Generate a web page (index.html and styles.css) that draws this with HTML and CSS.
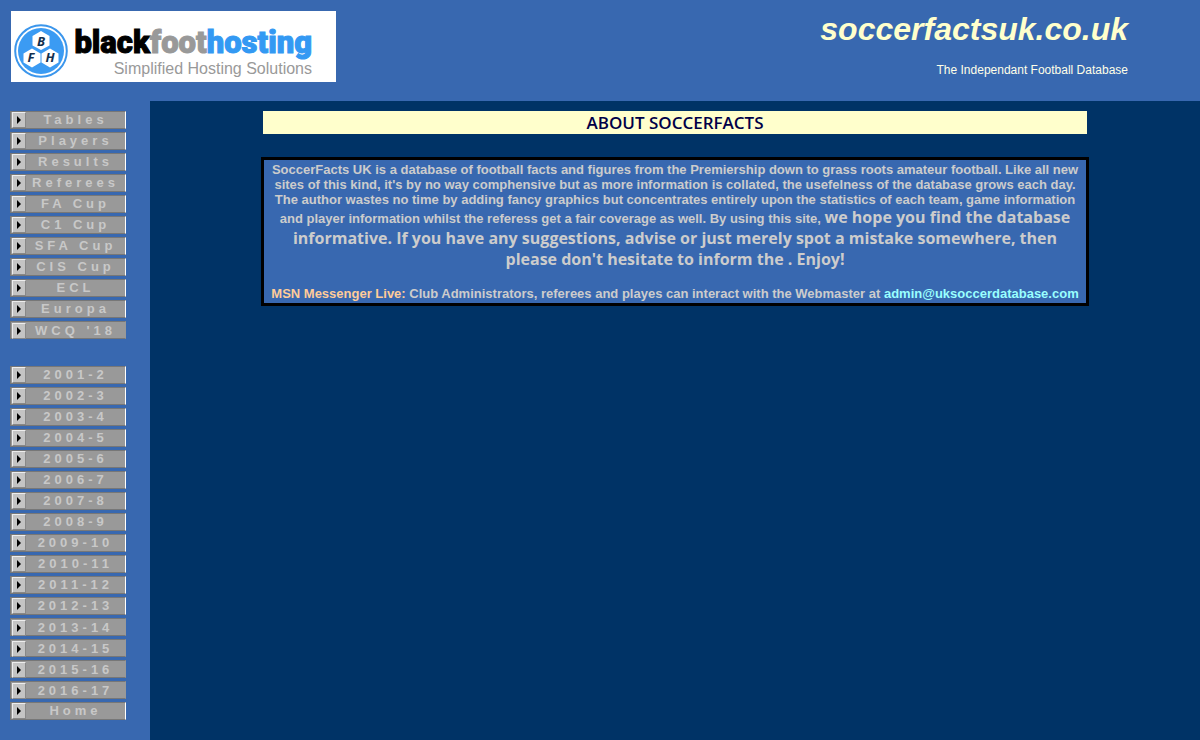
FILE: index.html
```html
<!DOCTYPE html>
<html lang="en">
<head>
    <meta charset="UTF-8">
    <meta name="viewport" content="width=device-width, initial-scale=1.0">
    <title>soccerfactsuk.co.uk</title>
    <link rel="stylesheet" href="styles.css">
</head>
<body>
<header class="header">
    <a class="sponsor" href="#">
        <svg class="sponsor-badge" viewBox="0 0 54 54" width="54" height="54" aria-hidden="true">
            <circle cx="27" cy="27" r="25.8" fill="#fff" stroke="#3b96ec" stroke-width="2"/>
            <circle cx="27" cy="27" r="23" fill="#3b9bf3"/>
            <g fill="#fff">
                <path d="M27 7l8.500 5v9.500L27 26l-8.500-4.500V12z"/>
                <path d="M18 24.500l8.500 5v9L18 43.500l-8.500-5v-9z"/>
                <path d="M36 24.500l8.500 5v9L36 43.500l-8.500-5v-9z"/>
            </g>
            <g class="badge-letters">
                <text x="27" y="22">B</text>
                <text x="17" y="38">F</text>
                <text x="36" y="38">H</text>
            </g>
        </svg>
        <span class="sponsor-text">
            <span class="sponsor-name">black<span class="grey">foot</span><span class="blue">hosting</span></span>
            <span class="sponsor-tag">Simplified Hosting Solutions</span>
        </span>
    </a>
    <div class="site">
        <h1>soccerfactsuk.co.uk</h1>
        <p>The Independant Football Database</p>
    </div>
</header>

<div class="page">
    <nav class="sidebar">
        <ul class="menu">
            <li><a href="#">Tables</a></li>
            <li><a href="#">Players</a></li>
            <li><a href="#">Results</a></li>
            <li><a href="#">Referees</a></li>
            <li><a href="#">FA Cup</a></li>
            <li><a href="#">C1 Cup</a></li>
            <li><a href="#">SFA Cup</a></li>
            <li><a href="#">CIS Cup</a></li>
            <li><a href="#">ECL</a></li>
            <li><a href="#">Europa</a></li>
            <li><a class="flat" href="#">WCQ '18</a></li>
        </ul>
        <ul class="menu">
            <li><a href="#">2001-2</a></li>
            <li><a href="#">2002-3</a></li>
            <li><a href="#">2003-4</a></li>
            <li><a href="#">2004-5</a></li>
            <li><a href="#">2005-6</a></li>
            <li><a href="#">2006-7</a></li>
            <li><a href="#">2007-8</a></li>
            <li><a href="#">2008-9</a></li>
            <li><a href="#">2009-10</a></li>
            <li><a href="#">2010-11</a></li>
            <li><a href="#">2011-12</a></li>
            <li><a href="#">2012-13</a></li>
            <li><a class="flat" href="#">2013-14</a></li>
            <li><a class="flat" href="#">2014-15</a></li>
            <li><a class="flat" href="#">2015-16</a></li>
            <li><a class="flat" href="#">2016-17</a></li>
            <li><a href="#">Home</a></li>
        </ul>
    </nav>

    <main class="main">
        <h2 class="title">ABOUT SOCCERFACTS</h2>
        <div class="about">
            <p>SoccerFacts UK is a database of football facts and figures from the Premiership down to grass roots amateur football. Like all new sites of this kind, it's by no way comphensive but as more information is collated, the usefelness of the database grows each day. The author wastes no time by adding fancy graphics but concentrates entirely upon the statistics of each team, game information and player information whilst the referess get a fair coverage as well. By using this site, <span class="large">we hope you find the database informative. If you have any suggestions, advise or just merely spot a mistake somewhere, then please don't hesitate to inform the . Enjoy!</span></p>
            <p><span class="msn">MSN Messenger Live:</span> Club Administrators, referees and playes can interact with the Webmaster at <a href="mailto:admin@uksoccerdatabase.com">admin@uksoccerdatabase.com</a></p>
        </div>
    </main>
</div>
</body>
</html>
```

FILE: styles.css
```css
* {
    box-sizing: border-box;
}

html, body {
    margin: 0;
    padding: 0;
    height: 100%;
}

body {
    display: flex;
    flex-direction: column;
    background-color: #003366;
    font-family: "Liberation Sans", Arial, sans-serif;
    font-size: 13px;
    line-height: 15px;
}

h1, h2, p, ul {
    margin: 0;
    padding: 0;
}

a {
    text-decoration: none;
}

.header {
    display: flex;
    justify-content: space-between;
    align-items: flex-start;
    background-color: #3868B0;
    padding: 11px 72px 19px 11px;
}

.sponsor {
    display: flex;
    align-items: center;
    width: 325px;
    height: 71px;
    padding: 8px 0 0 3px;
    background-color: #fff;
}

.sponsor-badge {
    flex: none;
}

.badge-letters {
    font-family: "Open Sans", sans-serif;
    font-size: 13px;
    font-style: italic;
    font-weight: 700;
    fill: #12304f;
    text-anchor: middle;
}

.sponsor-text {
    display: flex;
    flex-direction: column;
    align-items: flex-end;
    gap: 2px;
    width: 244px;
    padding-top: 2px;
}

.sponsor-name {
    color: #000;
    font-family: Roboto, sans-serif;
    font-size: 31px;
    font-weight: 900;
    line-height: 32px;
    -webkit-text-stroke: 1px;
}

.sponsor-name .grey {
    color: #999;
}

.sponsor-name .blue {
    color: #3399F3;
}

.sponsor-tag {
    color: #999;
    font-size: 16px;
    line-height: 16px;
}

.site {
    text-align: right;
}

.site h1 {
    color: #FFFFCC;
    font-size: 32px;
    font-style: italic;
    line-height: 36px;
}

.site p {
    color: #FFFFE8;
    font-size: 12px;
    margin-top: 16px;
}

.page {
    display: flex;
    flex: 1;
}

.sidebar {
    width: 150px;
    padding: 10px;
    background-color: #3868B0;
}

.menu {
    display: flex;
    flex-direction: column;
    gap: 3px;
    width: 116px;
    list-style: none;
}

.menu + .menu {
    margin-top: 27px;
}

.menu a {
    display: grid;
    grid-template-columns: 14px 1fr;
    align-items: center;
    height: 18px;
    padding-left: 1px;
    border: 1px solid #777;
    border-right-color: #fff;
    background-color: #999;
    color: #C8C8C8;
    font-weight: 700;
    letter-spacing: 4px;
    line-height: 14px;
    text-align: center;
}

.menu a.flat {
    border-right-color: #999;
    padding-top: 1px;
}

/* arrow box */
.menu a::before {
    content: "";
    grid-area: 1 / 1;
    height: 14px;
    border: 1px solid #eee;
    border-right-color: #888;
    border-bottom-color: #888;
    background-color: #C4C4C4;
}

.menu a::after {
    content: "";
    grid-area: 1 / 1;
    justify-self: center;
    border: 4px solid transparent;
    border-left-color: #000;
    border-right: 0;
}

.main {
    display: flex;
    flex-direction: column;
    align-items: center;
    flex: 1;
    padding: 10px;
}

.title {
    width: 80%;
    background-color: #FFFFCC;
    color: #000048;
    font-family: "Open Sans", sans-serif;
    font-size: 17px;
    font-weight: 600;
    line-height: 23px;
    text-align: center;
}

.about {
    width: calc(80% + 4px);
    margin-top: 23px;
    padding: 2px 4px;
    border: 3px solid #000;
    background-color: #3868B0;
    color: #CCC;
    font-weight: 700;
    text-align: center;
}

.about p + p {
    margin-top: 16px;
}

.large {
    font-family: "Open Sans", sans-serif;
    font-size: 16px;
    line-height: 21px;
}

.msn {
    color: #FFCC99;
}

.about a {
    color: #99FFFF;
}
```
